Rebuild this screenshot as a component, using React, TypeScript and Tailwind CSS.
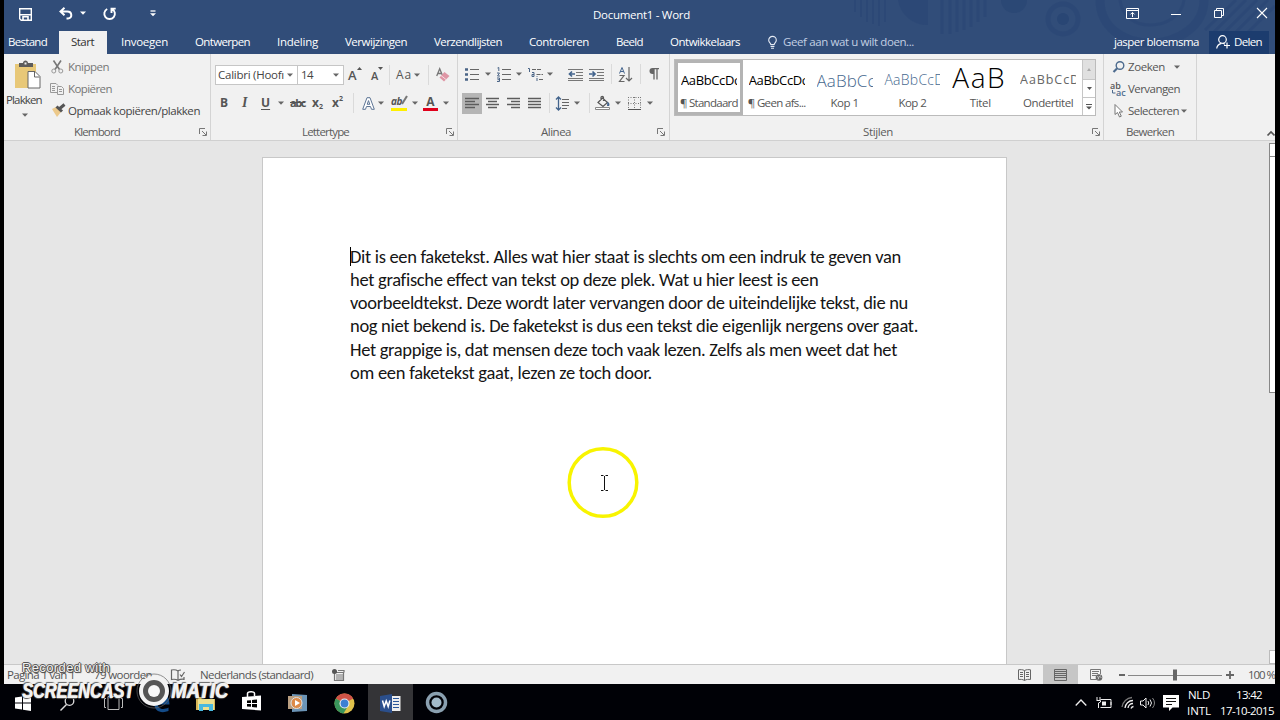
import { useLayoutEffect, useRef } from "react";
import type { ReactNode } from "react";

type FitProps = { w: number; children: ReactNode; className?: string; squeeze?: boolean };

// Text run tuned to an exact width, by tracking or by horizontal scale.
function Fit({ w, children, className = "", squeeze = false }: FitProps) {
  const ref = useRef<HTMLSpanElement>(null);
  useLayoutEffect(() => {
    const el = ref.current;
    if (!el) return;
    el.style.letterSpacing = "0px";
    el.style.transform = "none";
    const natural = el.getBoundingClientRect().width;
    const count = (el.textContent || "").length;
    if (squeeze) el.style.transform = `scaleX(${w / natural})`;
    else el.style.letterSpacing = `${(w - natural) / count}px`;
  }, [w, squeeze]);
  return (
    <span ref={ref} className={`inline-block origin-left whitespace-nowrap justify-self-start ${className}`}>
      {children}
    </span>
  );
}

function Icon({ w, h, children, className = "" }: { w: number; h: number; children: ReactNode; className?: string }) {
  return (
    <svg width={w} height={h} viewBox={`0 0 ${w} ${h}`} fill="none" className={`block shrink-0 overflow-visible ${className}`}>
      {children}
    </svg>
  );
}

function Caret({ className = "text-[#666]" }: { className?: string }) {
  return (
    <Icon w={6} h={4} className={className}>
      <path d="M0 0.5h6L3 3.8z" fill="currentColor" />
    </Icon>
  );
}

function Sep() {
  return <div className="h-5 w-px bg-[#dadada]" />;
}

function Launcher() {
  return (
    <Icon w={8} h={8}>
      <path d="M0.5 6V0.5H6M3 3l4 4M7.5 3.5v4h-4" stroke="#777" />
    </Icon>
  );
}

function GroupLabel({ w, left, cols, children }: { w: number; left: string; cols: string; children: string }) {
  return (
    <div className={`grid h-[18px] items-center pt-0.5 font-medium text-[#5c5c5c] ${left} ${cols}`}>
      <Fit w={w}>{children}</Fit>
      <Launcher />
    </div>
  );
}

function Lines({ rows, w = 13 }: { rows: [number, number][]; w?: number }) {
  return (
    <Icon w={w} h={12}>
      {rows.map(([a, b], i) => (
        <path key={i} d={`M${a} ${i * 3 + 1.5}H${b}`} stroke="#5c5c5c" strokeWidth="1.5" />
      ))}
    </Icon>
  );
}

function TitleBar() {
  return (
    <div className="grid h-7 grid-cols-[40px_21px_23px_46px_444px_533px_45px_43px_43px_14px] items-center pl-[15px] pt-0.5 text-white">
      <Icon w={13} h={13} className="-mt-px">
        <path d="M0.7 0.7h11.6v11.6H2.2L0.7 10.8z" stroke="#fff" strokeWidth="1.4" />
        <path d="M1 6.7h11M4 12V8.8h5V12" stroke="#fff" strokeWidth="1.6" />
      </Icon>
      <Icon w={14} h={13} className="-mt-1">
        <path d="M5.5 0.8L1.5 4.5l4 3.8M2 4.5h6.3c5.2 0 5.2 7 .7 7H7.5" stroke="#fff" strokeWidth="2" />
      </Icon>
      <Caret className="-mt-1 text-white" />
      <Icon w={13} h={13} className="-mt-1">
        <path d="M4.2 2A5.3 5.3 0 1 0 9 2M8.5 6V1.6h4.2" stroke="#fff" strokeWidth="1.9" />
      </Icon>
      <Icon w={7} h={7} className="ml-px -mt-1">
        <path d="M0.5 1h5" stroke="#fff" strokeWidth="1.3" />
        <path d="M0 3.2h6L3 6.2z" fill="#fff" />
      </Icon>
      <Fit w={97} className="text-[11.5px]">Document1 - Word</Fit>
      <Icon w={13} h={11} className="-mt-1">
        <path d="M0.5 0.5h12v10H0.5zM1 2.5h11M6.5 9V4.5M4.5 6.4l2-2 2 2" stroke="#fff" />
      </Icon>
      <Icon w={10} h={2}>
        <path d="M0 0.500h10" stroke="#fff" />
      </Icon>
      <Icon w={10} h={10} className="-mt-1">
        <path d="M0.5 2.5h7v7h-7zM2.5 2V0.5h7v7H8" stroke="#fff" />
      </Icon>
      <Icon w={10} h={10} className="-mt-1">
        <path d="M0 0l10 10M10 0L0 10" stroke="#fff" strokeWidth="1.1" />
      </Icon>
    </div>
  );
}

function Pattern() {
  return (
    <svg className="absolute right-0 top-0" width="460" height="54" viewBox="815 0 460 54" fill="none">
      <g stroke="#294674" strokeOpacity="0.6">
        <path d="M855 0v12M861 0v17M867 0v22M873 0v24M879 0v26M885 0v22" strokeWidth="2" />
        <path d="M898 0a29 29 0 0 0 30 25V0z" fill="#294674" fillOpacity="0.6" stroke="none" />
        <path d="M942 0v34M950 0v34M957 0v32M964 0v30M971 0v27M978 0v22M985 0v17" strokeWidth="3" />
        <path d="M1001 0a13 13 0 0 0 26 0z" fill="#294674" fillOpacity="0.7" stroke="none" />
        <circle cx="1063" cy="19" r="15" strokeWidth="5" />
        <circle cx="1063" cy="19" r="6" fill="#294674" stroke="none" />
        <path d="M1100 0c0 26 22 43 50 43s54-17 54-43" strokeWidth="9" />
        <path d="M1120 0c2 16 14 25 30 25s32-9 34-25" strokeWidth="3" />
        <path d="M1205 30l31-30M1212 34l34-34M1220 37l37-37M1230 38l38-38M1243 37l32-31" strokeWidth="3" />
      </g>
    </svg>
  );
}

function Tabs() {
  return (
    <div className="grid h-[26px] grid-cols-[51px_62px_74px_82px_68px_89px_95px_87px_54px_98px_15px_331px_95px_60px] items-center pl-1 pt-0.5 text-white">
      <Fit w={39}>Bestand</Fit>
      <div className="flex h-[23px] w-12 items-center self-end bg-[#f1f1f1] pb-px pl-3">
        <Fit w={23} className="text-[#333]">Start</Fit>
      </div>
      <Fit w={47}>Invoegen</Fit>
      <Fit w={55}>Ontwerpen</Fit>
      <Fit w={41}>Indeling</Fit>
      <Fit w={62}>Verwijzingen</Fit>
      <Fit w={68}>Verzendlijsten</Fit>
      <Fit w={60}>Controleren</Fit>
      <Fit w={27}>Beeld</Fit>
      <Fit w={70}>Ontwikkelaars</Fit>
      <Icon w={9} h={13}>
        <path d="M2.8 8.5C2.8 7 .7 6.500.7 4.200a3.800 3.800 0 0 1 7.600 0C8.300 6.500 6.200 7 6.200 8.500zM2.600 10.400h3.800M3 12.300h3" stroke="#e4eaf4" strokeWidth="1.100" />
      </Icon>
      <Fit w={131} className="text-[#c3cfe3]">Geef aan wat u wilt doen...</Fit>
      <Fit w={85}>jasper bloemsma</Fit>
      <div className="grid h-[23px] w-[60px] grid-cols-[18px_28px] items-center self-end bg-[#1c3c6e] pb-px pl-[7px]">
        <Icon w={15} h={14}>
          <circle cx="6.5" cy="4.5" r="3.8" stroke="#fff" strokeWidth="1.2" />
          <path d="M0.7 13.500C1 10.500 3 9 5.500 8.300M7 8.300l2 1M11 7.500v6M8 10.500h6" stroke="#fff" strokeWidth="1.2" />
        </Icon>
        <Fit w={28}>Delen</Fit>
      </div>
    </div>
  );
}

function ClipboardGroup() {
  return (
    <section className="flex w-[206px] flex-col pt-0.5">
      <div className="flex h-[66px]">
        <div className="flex w-[46px] flex-col pl-0.5 text-[#444]">
          <Icon w={28} h={31} className="ml-2 mt-1">
            <path d="M1 4h21v24H1z" fill="#e8c878" />
            <path d="M5 7V3h4c0-3.500 5-3.500 5 0h5v4z" fill="#5c5c5c" />
            <path d="M10.500 2.500h2v2h-2z" fill="#eee" />
            <path d="M14 11.500h7l5 5V28H14z" fill="#fff" stroke="#666" />
            <path d="M20.500 11.500v5.500h5" stroke="#666" />
          </Icon>
          <Fit w={38} className="mt-px leading-4">Plakken</Fit>
          <div className="ml-4 mt-[5px]"><Caret /></div>
        </div>
        <div className="grid grid-cols-[18px_136px] grid-rows-[22px_22px_22px] items-center text-[#777]">
          <Icon w={13} h={14} className="ml-px">
            <path d="M2.500 0.500l6 9M10 0.500L4 9.500" stroke="#777" strokeWidth="1.600" />
            <circle cx="2.800" cy="11" r="2" stroke="#999" />
            <circle cx="9.800" cy="11" r="2" stroke="#999" />
          </Icon>
          <Fit w={41}>Knippen</Fit>
          <Icon w={14} h={12}>
            <path d="M7 9.500H0.500v-9H6l2 2M2 3.500h3M2 5.500h3M2 7.500h3M7.500 3.500h4l2 2v6h-6zM9 6.500h3M9 8.500h3" stroke="#999" />
          </Icon>
          <Fit w={44}>Kopiëren</Fit>
          <Icon w={14} h={13} className="-mt-0.5 ml-0.5">
            <path d="M0 5l4-2 5 5-4 5z" fill="#ecc98b" />
            <path d="M4.500 2.500l5.500 5M6.500 5.500L12.500 0.500" stroke="#555" strokeWidth="3" />
          </Icon>
          <Fit w={132} className="text-[#444]">Opmaak kopiëren/plakken</Fit>
        </div>
      </div>
      <GroupLabel w={46} left="pl-[70px]" cols="grid-cols-[125px_8px]">Klembord</GroupLabel>
    </section>
  );
}

function FontGroup() {
  return (
    <section className="flex w-[247px] flex-col border-l border-[#d4d4d4] pt-[7px] text-[#555]">
      <div className="grid h-7 grid-cols-[82px_51px_23px_18px_7px_18px_14px_8px_20px] items-center pl-1">
        <div className="flex h-5 w-[83px] items-center border border-[#c6c6c6] bg-white pl-0.5 text-[#444]">
          <div className="w-[69px] overflow-hidden"><Fit w={66}>Calibri (Hoofı</Fit></div>
          <Caret />
        </div>
        <div className="flex h-5 w-[47px] items-center border border-[#c6c6c6] bg-white pl-[3px] text-[#444]">
          <div className="w-8"><Fit w={12}>14</Fit></div>
          <Caret />
        </div>
        <div className="flex items-start">
          <span className="text-[13px] font-semibold leading-4">A</span>
          <Icon w={5} h={4}><path d="M0 3L2.500 0 5 3z" fill="#555" /></Icon>
        </div>
        <div className="flex items-start">
          <span className="pt-px text-[11px] font-semibold leading-4">A</span>
          <Icon w={5} h={4}><path d="M0 0h5L2.500 3z" fill="#555" /></Icon>
        </div>
        <Sep />
        <Fit w={16} className="text-[12px] font-medium">Aa</Fit>
        <Caret />
        <Sep />
        <Icon w={14} h={15}>
          <path d="M0.700 8L3.700 0.700 6.700 8M1.800 5.500h4" stroke="#777" strokeWidth="1.300" />
          <path d="M8.500 4L13.500 8 8 13.500 3.500 9.500z" fill="#df96a5" />
          <path d="M5 7.500l5 4" stroke="#f5dbe0" />
        </Icon>
      </div>
      <div className="grid h-7 grid-cols-[21px_20px_17px_12px_22px_20px_21px_9px_16px_13px_21px_11px_20px_8px] items-center pl-[9px]">
        <b className="text-[12px]">B</b>
        <i className="pl-px font-['Liberation_Serif',serif] text-[14px] font-bold">I</i>
        <b className="text-[12px] underline underline-offset-2">U</b>
        <Caret />
        <Fit w={15} className="text-[11px] font-bold line-through">abc</Fit>
        <div className="flex items-end font-bold"><span className="text-[12px] leading-4">x</span><span className="text-[7px] leading-2">2</span></div>
        <div className="flex items-start font-bold"><span className="text-[12px] leading-4">x</span><span className="text-[7px] leading-2">2</span></div>
        <Sep />
        <Icon w={13} h={13}>
          <path d="M0.700 12.300L5 0.700h3l4.300 11.600H9.500L8.500 9.500h-4l-1 2.800zM5.200 7.300h2.600L6.500 3.600z" fill="#fff" stroke="#5d7595" />
        </Icon>
        <Caret />
        <div className="flex h-[15px] w-4 flex-col justify-between">
          <div className="flex h-2.5 items-center">
            <Fit w={11} className="text-[10px] font-bold italic">ab</Fit>
            <Icon w={5} h={9}><path d="M5 0L0 8" stroke="#777" strokeWidth="2" /></Icon>
          </div>
          <div className="h-[3px] bg-[#fff000]" />
        </div>
        <Caret />
        <div className="flex h-[15px] w-[15px] flex-col items-center justify-between">
          <b className="text-[12px] leading-[11px]">A</b>
          <div className="h-[3px] w-full bg-[#e0001b]" />
        </div>
        <Caret />
      </div>
      <div className="h-[5px]" />
      <GroupLabel w={47} left="pl-[91px]" cols="grid-cols-[144px_8px]">Lettertype</GroupLabel>
    </section>
  );
}

function ParagraphGroup() {
  return (
    <section className="flex w-[212px] flex-col border-l border-[#d4d4d4] pt-[7px] text-[#555]">
      <div className="grid h-7 grid-cols-[20px_12px_19px_12px_19px_21px_21px_22px_8px_21px_9px_12px] items-center pb-0.5 pl-[7px]">
        <Icon w={14} h={14}>
          <path d="M0 2.500h3M0 7.500h3M0 12.500h3" stroke="#4a6486" strokeWidth="2.500" />
          <path d="M5 2.500h9M5 7.500h9M5 12.500h9" stroke="#666" />
        </Icon>
        <Caret />
        <Icon w={14} h={15}>
          <path d="M0.500 1L1.800 0.500V4M0 6h2.500L.5 9H3M0 11h2.500v3.500H0M0.500 12.700h2" stroke="#4a6486" />
          <path d="M5 2.500h9M5 7.500h9M5 12.500h9" stroke="#666" />
        </Icon>
        <Caret />
        <Icon w={16} h={14}>
          <path d="M0 1.500h1.500V5M4 5.500h2v4H4V7.500h2M9 9v.8M9 11v3" stroke="#4a6486" />
          <path d="M4 2.500h10M8.500 7.500H15M11 12.500h5" stroke="#666" strokeDasharray="4 1" />
        </Icon>
        <Caret />
        <Icon w={15} h={13}>
          <path d="M0 1.500h15M8 4.500h7M8 7.500h7M0 10.500h15M0 12.500h15" stroke="#777" />
          <path d="M7 6H2M4 3.500L1.500 6 4 8.500" stroke="#43648d" strokeWidth="1.700" />
        </Icon>
        <Icon w={15} h={13}>
          <path d="M0 1.500h15M8 4.500h7M8 7.500h7M0 10.500h15M0 12.500h15" stroke="#777" />
          <path d="M0 6h5M3.500 3.500L6 6 3.500 8.500" stroke="#43648d" strokeWidth="1.700" />
        </Icon>
        <Sep />
        <Icon w={13} h={15}>
          <path d="M0.500 6.500L3 0.500 5.500 6.500M1.300 4.500h3.500" stroke="#43648d" />
          <path d="M0.500 8.500H5l-4.500 6H5.500M10 0v14M7 11l3 3 3-3" stroke="#666" strokeWidth="1.200" />
        </Icon>
        <Sep />
        <Icon w={10} h={12}>
          <path d="M5 0.500v11M8 0.500v11M4 0.700h6" stroke="#666" strokeWidth="1.300" />
          <path d="M5 0H3.500a3 3 0 0 0 0 6H5z" fill="#666" />
        </Icon>
      </div>
      <div className="grid h-7 grid-cols-[24px_21px_21px_21px_7px_18px_15px_6px_20px_13px_19px_6px] items-center pl-1">
        <div className="flex h-[21px] w-5 items-center justify-center bg-[#b5b5b5]"><Lines w={14} rows={[[0, 14], [0, 10], [0, 14], [0, 10]]} /></div>
        <Lines rows={[[0, 13], [2, 11], [0, 13], [2, 11]]} />
        <Lines rows={[[0, 13], [4, 13], [0, 13], [4, 13]]} />
        <Lines rows={[[0, 13], [0, 13], [0, 13], [0, 13]]} />
        <Sep />
        <Icon w={14} h={15}>
          <path d="M2.500 1v13M0 3.500L2.500 1 5 3.500M0 11.500L2.500 14 5 11.500" stroke="#43648d" strokeWidth="1.300" />
          <path d="M6 3.500h7M6 6.500h7M6 9.500h7M6 12.500h5" stroke="#666" />
        </Icon>
        <Caret />
        <Sep />
        <Icon w={16} h={14}>
          <path d="M3 6.500L7.500 2l5 4.500L8 10.500zM6 4V1.500c0-1.500 2.500-1.500 2.500 0V5" stroke="#555" strokeWidth="1.200" />
          <path d="M12.500 5.500c2 1.500 2.500 3 1.500 4.500h-2z" fill="#43648d" />
          <path d="M0.500 11.500h14v2h-14z" fill="#fff" stroke="#888" />
        </Icon>
        <Caret />
        <Icon w={13} h={13}>
          <path d="M0.500 0v12M6.500 0v12M12.500 0v12M0 0.500h13M0 6.500h13" stroke="#777" strokeDasharray="1 1.500" />
          <path d="M0 12.500h13" stroke="#555" />
        </Icon>
        <Caret />
      </div>
      <div className="h-[5px]" />
      <GroupLabel w={30} left="pl-[83px]" cols="grid-cols-[116px_8px]">Alinea</GroupLabel>
    </section>
  );
}

type Style = { name: string; nameW: number; sample: string; look: string; sampleW: number };

const styles: Style[] = [
  { name: "¶ Standaard", nameW: 58, sample: "AaBbCcDc", look: "text-[13px] text-black font-medium", sampleW: 59 },
  { name: "¶ Geen afs...", nameW: 58, sample: "AaBbCcDc", look: "text-[13px] text-black font-medium", sampleW: 59 },
  { name: "Kop 1", nameW: 28, sample: "AaBbCc", look: "text-[17px] text-[#46688e] font-light", sampleW: 59 },
  { name: "Kop 2", nameW: 28, sample: "AaBbCcD", look: "text-[14px] text-[#46688e] font-light", sampleW: 60 },
  { name: "Titel", nameW: 21, sample: "AaB", look: "-mt-1.5 text-[28px] text-black font-light", sampleW: 54 },
  { name: "Ondertitel", nameW: 50, sample: "AaBbCcD", look: "text-[12.500px] text-[#666]", sampleW: 60 },
];

function StylesGroup() {
  return (
    <section className="flex w-[434px] flex-col border-l border-[#d4d4d4] pt-[5px]">
      <div className="ml-1 flex h-[57px] w-[422px] border border-[#bbb] bg-white">
        <div className="grid w-[407px] grid-cols-6">
          {styles.map((s, i) => (
            <div key={s.name} className={i === 0 ? "flex flex-col items-center border-[3px] border-[#b4b4b4]" : "flex flex-col items-center border-[3px] border-transparent"}>
              <div className="flex h-[31px] w-14 items-center overflow-hidden pt-[3px] font-['Open_Sans',sans-serif] leading-none">
                <Fit w={s.sampleW} className={s.look}>{s.sample}</Fit>
              </div>
              <Fit w={s.nameW} className="leading-[18px] text-[#555]">{s.name}</Fit>
            </div>
          ))}
        </div>
        <div className="grid w-[13px] grid-rows-[19px_18px_18px] border-l border-[#c6c6c6]">
          <div className="flex items-center justify-center bg-[#e0e0e0]"><Icon w={4} h={3}><path d="M0 3h4L2 0z" fill="#aaa" /></Icon></div>
          <div className="flex items-center justify-center border-t border-[#c6c6c6]"><Icon w={5} h={3}><path d="M0 0h5L2.500 3z" fill="#555" /></Icon></div>
          <div className="flex items-center justify-center border-t border-[#c6c6c6]"><Icon w={6} h={6}><path d="M0 0h6v1H0zM0 2.500h6L3 5.500z" fill="#555" /></Icon></div>
        </div>
      </div>
      <div className="h-1.5" />
      <GroupLabel w={30} left="pl-[193px]" cols="grid-cols-[229px_8px]">Stijlen</GroupLabel>
    </section>
  );
}

function EditGroup() {
  return (
    <section className="w-[94px] border-x border-[#d4d4d4] pt-0.5 text-[#555]">
      <div className="grid grid-cols-[16px_38px_12px] grid-rows-[22px] items-center pl-2">
        <Icon w={12} h={12} className="ml-px">
          <circle cx="7" cy="4.500" r="3.800" stroke="#4d6b8e" strokeWidth="1.400" />
          <path d="M4 7.500L0.500 11" stroke="#4d6b8e" strokeWidth="2.200" />
        </Icon>
        <Fit w={37}>Zoeken</Fit>
        <div className="pl-2"><Caret /></div>
      </div>
      <div className="grid grid-cols-[18px_60px] grid-rows-[22px] items-center pl-1.5">
        <div className="flex flex-col text-[9px] font-semibold leading-[7px]">
          <span>ab</span>
          <span className="flex pl-0.5 text-[#4d6b8e]"><Icon w={4} h={6}><path d="M0.500 1v3h3" stroke="#4d6b8e" /></Icon>ac</span>
        </div>
        <Fit w={52}>Vervangen</Fit>
      </div>
      <div className="grid grid-cols-[15px_53px_8px] grid-rows-[22px] items-center pl-[9px]">
        <Icon w={9} h={14} className="ml-px">
          <path d="M1 0.500v10l2.500-2 2 4.500 1.800-.8-2-4.200H8.500z" fill="#fff" stroke="#777" />
        </Icon>
        <Fit w={51}>Selecteren</Fit>
        <Caret />
      </div>
      <GroupLabel w={48} left="pl-[22px]" cols="grid-cols-[60px] [&>svg]:hidden">Bewerken</GroupLabel>
    </section>
  );
}

const bodyLines: [string, number][] = [
  ["Dit is een faketekst. Alles wat hier staat is slechts om een indruk te geven van", 551],
  ["het grafische effect van tekst op deze plek. Wat u hier leest is een", 468],
  ["voorbeeldtekst. Deze wordt later vervangen door de uiteindelijke tekst, die nu", 558],
  ["nog niet bekend is. De faketekst is dus een tekst die eigenlijk nergens over gaat.", 568],
  ["Het grappige is, dat mensen deze toch vaak lezen. Zelfs als men weet dat het", 547],
  ["om een faketekst gaat, lezen ze toch door.", 302],
];

function DocumentArea() {
  return (
    <main className="flex h-[524px] justify-between border-t border-[#d0d0d0] bg-[#e6e6e6] pl-[258px]">
      <article className="relative mt-4 w-[745px] border border-b-0 border-[#c8c8c8] bg-white pl-[87px] pt-[87px] font-['Carlito','Lato',sans-serif] text-[18.500px] text-[#151515]">
        <div className="absolute left-[87px] top-[89px] h-[19px] w-px bg-black" />
        {bodyLines.map(([line, w]) => (
          <p key={line} className="h-[23.150px] leading-[23px]"><Fit w={w}>{line}</Fit></p>
        ))}
        <svg className="absolute left-[303px] top-[287px]" width="76" height="76" viewBox="0 0 76 76" fill="none">
          <circle cx="37" cy="37.500" r="33.800" stroke="#f8f400" strokeWidth="3.500" />
          <path d="M35 30.500h2.500M39.500 30.500H42M38.500 31v14M35 45.500h2.500M39.500 45.500H42" stroke="#111" />
        </svg>
      </article>
      <div className="flex w-[6px] flex-col">
        <div className="mt-0.5 h-[14px] border border-r-0 border-[#888] bg-white" />
        <div className="h-[236px] border border-r-0 border-t-0 border-[#888] bg-white" />
        <div className="grow" />
        <div className="h-[14px] border border-r-0 border-[#bbb] bg-white" />
      </div>
    </main>
  );
}

function StatusBar() {
  return (
    <footer className="grid h-5 grid-cols-[87px_77px_29px_132px_686px_25px_47px_29px_9px_98px_22px_28px] items-center overflow-hidden border-t border-[#c8c8c8] bg-[#f1f1f1] pb-px pl-[3px] text-[#555]">
      <Fit w={68}>Pagina 1 van 1</Fit>
      <Fit w={58}>79 woorden</Fit>
      <Icon w={14} h={12}>
        <path d="M7 2v9.500M7 2C5 .5 3 .5 .5 1v9.500c2.500-.5 4.500-.5 6.500 1M7 2c1-1 2-1 3-1M7 11.500c2-1.500 3-1.500 6-1.200V8M9 5.500l1.500 2L13.500 3" stroke="#666" strokeWidth="1.200" />
      </Icon>
      <Fit w={113}>Nederlands (standaard)</Fit>
      <Icon w={13} h={12}>
        <path d="M2.500 3.500h9v8h-9zM6 1.500h6v2M4 6h7M4 8h7M4 10h7" stroke="#777" strokeWidth="1.200" />
        <circle cx="2.500" cy="2.500" r="2.500" fill="#555" />
      </Icon>
      <Icon w={13} h={12}>
        <path d="M6.500 1.500v10M6.500 1.500C4.500.5 2.500.5.5.8v9.700c2-.3 4-.3 6 1M6.500 1.500c2-1 4-1 6-.7v9.700c-2-.3-4-.3-6 1M2 3.500h3M2 5.500h3M2 7.500h3M8 3.500h3M8 5.500h3M8 7.500h3" stroke="#666" />
      </Icon>
      <div className="flex h-5 w-[35px] items-center justify-center bg-[#c6c6c6]">
        <Icon w={13} h={12}><path d="M0.500 0.500h12v11H0.500zM1 2.500h11M1 4.500h11M1 6.500h11M1 8.500h11" stroke="#666" /></Icon>
      </div>
      <Icon w={13} h={12}>
        <path d="M6 10.500H0.500V0.500h10V5M2 2.500h7M2 4.500h6M2 6.500h4" stroke="#777" />
        <circle cx="9" cy="8.500" r="3.300" fill="#666" />
        <path d="M7 7.500l2 1-1 2M10.500 6.500l-1 1 2 1" stroke="#ddd" strokeWidth="0.800" />
      </Icon>
      <Icon w={6} h={2}><path d="M0 1h6" stroke="#666" strokeWidth="2" /></Icon>
      <Icon w={94} h={12}><path d="M0 6.500h94" stroke="#888" /><path d="M45 0.500h4v11h-4z" fill="#666" /></Icon>
      <Icon w={8} h={8}><path d="M0 4h8M4 0v8" stroke="#666" strokeWidth="1.800" /></Icon>
      <Fit w={27}>100 %</Fit>
    </footer>
  );
}

function Taskbar() {
  return (
    <nav className="flex h-9 items-center bg-[#000106] text-white">
      <div className="grid h-9 w-[368px] grid-cols-[45px_44px_48px_44px_46px_46px_46px_24px] items-center pl-[15px] pt-0.5">
        <Icon w={16} h={16}>
          <path d="M0 2.500l7-1v6H0zM8 1.300L16 0v7.500H8zM0 8.500h7v6l-7-1zM8 8.500h8V16l-8-1.200z" fill="#fff" />
        </Icon>
        <Icon w={15} h={15}><circle cx="9.500" cy="5" r="4.300" stroke="#ddd" strokeWidth="1.300" /><path d="M6.500 8.500L0.500 14.500" stroke="#ddd" strokeWidth="1.500" /></Icon>
        <Icon w={19} h={14}><path d="M4 0.500h11v13H4zM2 2.500H.5v9H2M17 2.500h1.500v9H17" stroke="#bbb" /></Icon>
        <Icon w={18} h={18}>
          <path d="M1 8C2 2 6 0 9.500 0 15 0 17.500 4 17.500 10.500H6c0 5 6 5.500 10.500 3v3.500C9 20 2 17 2.500 10 3 7 6 5 8 5 5 4.500 2.500 6 1 8z" fill="#134b88" />
          <path d="M6.500 7.500h6c0-4-5.500-4-6 0z" fill="#000106" />
        </Icon>
        <Icon w={20} h={17}>
          <path d="M0 2h6l1 2h12v11H0z" fill="#d6b658" />
          <path d="M2 4h16v11H2z" fill="#ece08f" />
          <path d="M3 16V9h14v7h-4v-4H7v4z" fill="#48b8df" />
        </Icon>
        <Icon w={20} h={21} className="-mt-1">
          <path d="M0 6l19-1.500v15L0 18z" fill="#fff" />
          <path d="M5.500 6V2.500c0-2 7-2.500 7 0V5" stroke="#fff" strokeWidth="1.500" />
          <path d="M5 9.500l4-.3V12H5zM10 9l5-.5V12h-5zM5 13h4v2.800l-4-.3zM10 13h5v3.500l-5-.5z" fill="#000" />
        </Icon>
        <Icon w={19} h={18}>
          <path d="M4 0l15 1v16l-15 1z" fill="#6b94b6" />
          <path d="M0 2h14v13H0z" fill="#b99e80" />
          <circle cx="8.500" cy="9" r="5.500" fill="#dd8a48" stroke="#dce1e5" />
          <path d="M7 6l5 3-5 3z" fill="#fff" />
        </Icon>
        <Icon w={21} h={21}>
          <circle cx="10.500" cy="10.500" r="10" fill="#e0c24c" />
          <path d="M10.500 10.500L1.800 5.500A10 10 0 0 1 19.200 5.500z" fill="#cf5347" />
          <path d="M10.500 10.500L1.800 5.500A10 10 0 0 0 9.500 20.500L14 13z" fill="#3a965c" />
          <circle cx="10.500" cy="10.500" r="5" fill="#eee" />
          <circle cx="10.500" cy="10.500" r="3.900" fill="#3e7fd3" />
        </Icon>
      </div>
      <div className="flex h-9 w-[45px] items-center justify-center bg-[#343437] pt-0.5">
        <Icon w={21} h={19}>
          <path d="M10 2h10.500v15H10z" fill="#eee" />
          <path d="M13 4.500h6M13 7.500h6M13 10.500h6M13 13.500h6" stroke="#2b579a" />
          <path d="M0 2L12 0v19L0 17z" fill="#2b4f8c" />
          <path d="M2.500 6.500l1.700 6 2-5.500 2 5.500 1.700-6" stroke="#fff" strokeWidth="1.500" />
        </Icon>
      </div>
      <div className="w-[661px] pl-3 pt-px">
        <Icon w={23} h={23}>
          <circle cx="11.500" cy="11.500" r="9" stroke="#8aa0b0" strokeWidth="3.500" />
          <circle cx="11.500" cy="11.500" r="5" fill="#a3bac9" />
        </Icon>
      </div>
      <div className="grid grid-cols-[22px_26px_19px_23px_24px_32px_56px] items-center pl-px pt-px">
        <Icon w={12} h={7}><path d="M0.700 6.500L6 1l5.300 5.500" stroke="#eee" strokeWidth="1.300" /></Icon>
        <Icon w={16} h={11} className="-ml-px">
          <path d="M4.500 2.500H15v8H4.500M15 5v3" stroke="#eee" />
          <path d="M6 4.500h4v4H6z" fill="#eee" />
          <path d="M1 0v3M4 0v3M0.500 3.500h4v1.500l-2 1v5" stroke="#eee" />
        </Icon>
        <Icon w={13} h={13} className="-ml-0.5">
          <path d="M1 11A11 11 0 0 1 11 1.500" stroke="#777" strokeWidth="1.300" />
          <path d="M4 12a8 8 0 0 1 8-7.500M7 12a5 5 0 0 1 5-4.500M10 12.500a3 3 0 0 1 2.500-2" stroke="#eee" strokeWidth="1.300" />
        </Icon>
        <Icon w={15} h={12} className="-ml-0.5">
          <path d="M0.500 4h2.500l3-3v10l-3-3H0.500zM8 4q1.500 2 0 4M10 2.500q3 3.500 0 7" stroke="#eee" />
          <path d="M12.500 1q4 5 0 10" stroke="#888" />
        </Icon>
        <Icon w={16} h={16} className="-ml-0.5"><path d="M0 0h16v12.500H9.500L6 16v-3.500H0z" fill="#fff" /><path d="M3 3.500h10M3 6.500h10M3 9.500h6" stroke="#111" /></Icon>
        <div className="-ml-0.5 flex flex-col items-start leading-4"><Fit w={22} className="ml-px">NLD</Fit><Fit w={24}>INTL</Fit></div>
        <div className="flex flex-col items-start leading-4"><Fit w={26} className="ml-[15px]">13:42</Fit><Fit w={54} className="-ml-px">17-10-2015</Fit></div>
      </div>
    </nav>
  );
}

function Watermark() {
  return (
    <div className="absolute left-[22px] top-[660px] h-[50px] w-[210px] font-['Liberation_Sans',sans-serif] text-[#f2f2f2]">
      <div className="text-[13px] leading-[15px] [text-shadow:1px_0_#555,-1px_0_#555,0_1px_#555,0_-1px_#555,1px_1px_1px_#444]">
        <Fit w={88}>Recorded with</Fit>
      </div>
      <div className="-mt-px grid grid-cols-[115px_34px_60px] items-center text-[22px] font-bold italic leading-8 [text-shadow:1px_0_#eee,0_1px_1px_#555,-1px_-1px_1px_#666]">
        <Fit w={112} squeeze>SCREENCAST</Fit>
        <Icon w={34} h={34}>
          <circle cx="17" cy="17" r="13" fill="#555" stroke="#f3f3f3" strokeWidth="4" />
          <circle cx="17" cy="17" r="17" stroke="#666" strokeWidth="0.700" />
          <circle cx="17" cy="17" r="6" fill="#f7f7f7" />
        </Icon>
        <Fit w={57} squeeze>MATIC</Fit>
      </div>
    </div>
  );
}

export default function App() {
  return (
    <div className="relative h-[720px] w-[1280px] overflow-hidden bg-black font-['Open_Sans','Noto_Sans',sans-serif] text-[11.500px] leading-4">
      <div className="ml-1 w-[1271px] overflow-hidden">
        <header className="relative h-[54px] bg-[#314d79]">
          <Pattern />
          <div className="relative"><TitleBar /><Tabs /></div>
        </header>
        <div className="flex h-[86px] bg-[#f1f1f1]">
          <ClipboardGroup />
          <FontGroup />
          <ParagraphGroup />
          <StylesGroup />
          <EditGroup />
          <div className="flex grow items-end justify-end pb-1">
            <Icon w={8} h={5}><path d="M0.500 4.500L4 1l3.500 3.500" stroke="#555" strokeWidth="1.700" /></Icon>
          </div>
        </div>
        <DocumentArea />
        <StatusBar />
      </div>
      <Taskbar />
      <Watermark />
    </div>
  );
}
